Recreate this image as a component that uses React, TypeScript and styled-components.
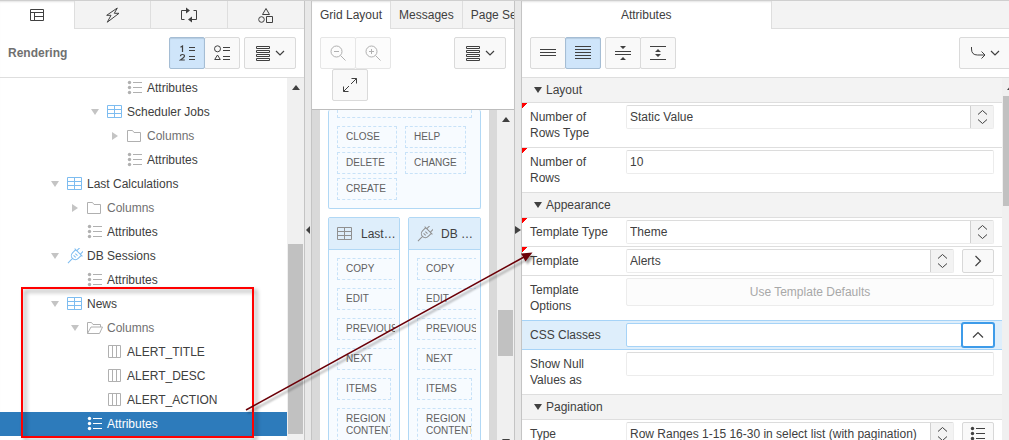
import React from "react";
import styled, { createGlobalStyle, css } from "styled-components";

const GlobalStyle = createGlobalStyle`
  *, *::before, *::after { box-sizing: border-box; }
  body {
    margin: 0;
    overflow: hidden;
    background: #fff;
    color: #404040;
    font-family: "Liberation Sans", Arial, sans-serif;
    font-size: 12px;
    line-height: 16px;
  }
  button, input, select { font: inherit; color: inherit; margin: 0; }
  button { padding: 0; cursor: pointer; }
  svg { display: block; flex: none; }
`;

/* ---------- page frame ---------- */

const Page = styled.div`
  position: relative;
  display: grid;
  grid-template-columns: minmax(0, 304fr) 8px minmax(0, 202fr) 8px minmax(0, 487fr);
  height: 100vh;
  border-top: 1px solid #cfcfcf;
  overflow: hidden;
`;

const Panel = styled.section`
  display: flex;
  flex-direction: column;
  min-width: 0;
  min-height: 0;
  overflow: hidden;
  background: #fff;
  box-shadow: inset 0 2px 2px -1px #e4e4e4;
`;

const WidePanel = styled.div`
  display: flex;
  flex: 1;
  flex-direction: column;
  min-height: 0;
  margin-right: -10px;
`;

const Splitter = styled.div`
  display: flex;
  align-items: center;
  justify-content: center;
  padding-top: 18px;
  background: #e8e8e8;
  border: solid #c4c4c4;
  border-width: 0 1px;
`;

const SplitHandle = styled.button`
  display: flex;
  justify-content: center;
  width: 6px;
  height: 16px;
  align-items: center;
  border: 0;
  background: none;
`;

/* ---------- tabs ---------- */

const IconTabs = styled.div`
  display: grid;
  grid-template-columns: 74fr 76fr 77fr 77fr;
  flex: none;
  height: 28px;
`;

const TextTabs = styled.div`
  display: flex;
  flex: none;
  height: 28px;
  overflow: hidden;
`;

const Tab = styled.button<{ $active?: boolean; $half?: boolean }>`
  display: flex;
  flex: none;
  align-items: center;
  justify-content: center;
  ${(p) => p.$half && "width: 50%;"}
  padding: 0 8px;
  border: solid #dedede;
  border-width: 0 0 1px 1px;
  background: #f3f3f3;
  white-space: nowrap;
  ${(p) => p.$active && "background: transparent; border-color: transparent; border-left-width: 0;"}
  & + & { border-left-width: 1px; }
`;

const TabFill = styled.div`
  flex: 1;
  border: solid #dedede;
  border-width: 0 0 1px 1px;
  background: #f3f3f3;
`;

/* ---------- toolbars ---------- */

const Toolbar = styled.div<{ $strong?: boolean }>`
  display: flex;
  flex: none;
  align-items: flex-start;
  gap: 4px;
  padding: 8px;
  border-bottom: 1px solid ${(p) => (p.$strong ? "#bdbdbd" : "#dedede")};
`;

const Title = styled.h2`
  flex: 1;
  margin: 0;
  font-size: 12px;
  line-height: 32px;
  color: #707070;
`;

const StackedTools = styled.div`
  display: flex;
  flex: 1;
  flex-direction: column;
  align-items: flex-start;
`;

const Spacer = styled.div`
  flex: 1;
`;

const ButtonGroup = styled.div`
  display: flex;
`;

const ToolButton = styled.button<{ $active?: boolean; $menu?: boolean; $indent?: boolean }>`
  display: flex;
  align-items: center;
  justify-content: center;
  gap: 4px;
  width: ${(p) => (p.$menu ? 52 : 36)}px;
  height: 32px;
  border: 1px solid #dadada;
  border-radius: 2px;
  background: #f9f9f9;
  ${(p) => p.$indent && "margin-left: 12px;"}
  & + & { margin-left: -1px; }
  ${(p) =>
    p.$active &&
    css`
      position: relative;
      border-color: #a5bdd4;
      background: #cfe5fa;
      box-shadow: inset 0 1px 1px #b4cbe0;
    `}
  &:disabled { border-color: #e6e6e6; background: #fcfcfc; color: #b0b0b0; cursor: default; }
`;

/* ---------- scroll bars ---------- */

const ScrollTrack = styled.div`
  display: flex;
  flex: none;
  flex-direction: column;
  align-items: center;
  width: 17px;
  padding: 0 1px;
  background: #f0f0f0;
`;

const ScrollArrow = styled.div`
  display: flex;
  flex: none;
  align-items: center;
  height: 18px;
`;

const ScrollPart = styled.div<{ $grow: number; $thumb?: boolean }>`
  flex: ${(p) => p.$grow} 0 0;
  align-self: stretch;
  ${(p) => p.$thumb && "background: #c1c1c1;"}
`;

const ScrollEnd = styled.div`
  flex: none;
  height: 2px;
  overflow: hidden;
`;

/* ---------- tree ---------- */

const Split = styled.div`
  display: flex;
  flex: 1;
  min-height: 0;
`;

const Viewport = styled.div`
  flex: 1;
  min-width: 0;
  overflow: hidden;
`;

const Tree = styled.ul`
  margin: -2px 0 0;
  padding: 0;
  list-style: none;
`;

const TreeRow = styled.li<{ $level: number; $muted?: boolean; $selected?: boolean }>`
  display: flex;
  align-items: center;
  gap: 4px;
  height: 24px;
  padding-left: ${(p) => 27 + p.$level * 20}px;
  white-space: nowrap;
  color: ${(p) => (p.$selected ? "#fff" : p.$muted ? "#707070" : "#404040")};
  background: ${(p) => (p.$selected ? "#2d7bbb" : "transparent")};
`;

const TreeToggle = styled.span`
  display: flex;
  justify-content: center;
  width: 16px;
  color: #c4c4c4;
`;

const TreeIcon = styled.span<{ $tone: string }>`
  display: flex;
  width: 16px;
  color: ${(p) => p.$tone};
`;

/* ---------- grid layout canvas ---------- */

const Canvas = styled.div`
  flex: 1;
  min-width: 0;
  padding: 0 8px;
  overflow: hidden;
  background: #d9d9d9;
`;

const Sheet = styled.div`
  display: flex;
  flex-direction: column;
  gap: 8px;
  padding: 0 8px;
  background: #fff;
`;

const RegionPair = styled.div`
  display: grid;
  grid-template-columns: 72fr 73fr;
  gap: 8px;
`;

const Region = styled.div<{ $open?: boolean }>`
  min-width: 0;
  border: 1px solid #b1d8f5;
  border-radius: 2px;
  background: #f7fbff;
  font-size: 10px;
  line-height: 12px;
  color: #606060;
  ${(p) => p.$open && "border-top: 0; padding: 0 8px 8px;"}
`;

const RegionHead = styled.div`
  display: flex;
  align-items: center;
  gap: 8px;
  height: 32px;
  padding: 0 0 0 8px;
  border-bottom: 1px solid #b1d8f5;
  background: #deeefb;
  color: #909090;
`;

const RegionTitle = styled.span`
  overflow: hidden;
  text-overflow: ellipsis;
  white-space: nowrap;
  font-size: 12px;
  line-height: 16px;
  color: #404040;
`;

const RegionBody = styled.div`
  display: flex;
  flex-direction: column;
  gap: 8px;
  margin: 8px 4px 0 8px;
  overflow: hidden;
`;

const Slot = styled.div<{ $fit?: boolean }>`
  min-width: 60px;
  min-height: 22px;
  padding: 4px 8px;
  border: 1px dashed #c8e2f8;
  overflow: hidden;
  white-space: nowrap;
  ${(p) => p.$fit && "min-width: 0; margin-right: 4px; padding-right: 0; white-space: normal;"}
`;

const SlotFrame = styled.div`
  height: 8px;
  border: 1px dashed #c8e2f8;
  border-top: 0;
`;

const SlotGrid = styled.div`
  display: grid;
  grid-template-columns: max-content max-content;
  gap: 4px 8px;
  padding-top: 8px;
`;

/* ---------- property editor ---------- */

const GroupHead = styled.h3`
  display: flex;
  align-items: center;
  gap: 4px;
  height: 25px;
  margin: 0;
  padding: 0 12px;
  border-bottom: 1px solid #dedede;
  background: #f3f3f3;
  font-size: 12px;
  font-weight: 400;
`;

const Field = styled.div<{ $required?: boolean; $focus?: boolean }>`
  display: flex;
  align-items: flex-start;
  padding: 0 8px;
  border-bottom: 1px solid #dedede;
  ${(p) => p.$required && "background: linear-gradient(135deg, #f00 4px, transparent 4px) no-repeat;"}
  ${(p) =>
    p.$focus &&
    css`
      background: #deeefb;
      border-color: #a6d3f7;
      box-shadow: 0 -1px #a6d3f7;
    `}
`;

const FieldLabel = styled.label`
  flex: 0 0 96px;
  padding: 6px 16px 6px 0;
`;

const FieldControls = styled.div<{ $joined?: boolean }>`
  display: flex;
  flex: 1;
  gap: ${(p) => (p.$joined ? 0 : 8)}px;
  min-width: 0;
  padding: 2px 0;
`;

const TextInput = styled.input<{ $focus?: boolean }>`
  flex: 1;
  min-width: 0;
  height: 24px;
  padding: 0 3px;
  border: 1px solid #ececec;
  border-top-color: #dcdcdc;
  border-radius: 2px;
  outline: 0;
  background: #fff;
  ${(p) => p.$focus && "border-color: #a6d3f7;"}
`;

const SelectBox = styled.div`
  display: flex;
  flex: 1;
  min-width: 0;
  height: 24px;
  border: 1px solid #ececec;
  border-top-color: #dcdcdc;
  border-radius: 2px;
  background: #fff;
`;

const Select = styled.select`
  flex: 1;
  min-width: 0;
  padding: 0 3px;
  border: 0;
  outline: 0;
  appearance: none;
  background: none;
`;

const SelectMark = styled.span`
  display: flex;
  flex: none;
  align-items: center;
  justify-content: center;
  width: 23px;
  border-left: 1px solid #d0d0d0;
  background: #f3f3f3;
  pointer-events: none;
`;

const SideButton = styled.button<{ $focus?: boolean }>`
  display: flex;
  flex: none;
  align-items: center;
  justify-content: center;
  width: 32px;
  height: 24px;
  border: 1px solid #d8d8d8;
  border-radius: 2px;
  background: #f9f9f9;
  ${(p) => p.$focus && "border-color: #3d9be9; background: #fff; box-shadow: 0 0 0 1px #3d9be9;"}
`;

const WideButton = styled.button`
  flex: 1;
  height: 28px;
  border: 1px solid #ececec;
  border-radius: 2px;
  background: #fcfcfc;
  color: #a8a8a8;
`;

/* ---------- annotation ---------- */

const RedFrame = styled.div`
  position: absolute;
  left: 21px;
  top: 286px;
  width: 233px;
  height: 151px;
  border: 2px solid #f00;
  filter: drop-shadow(3px 3px 2px rgba(0, 0, 0, 0.4));
  pointer-events: none;
`;

const ArrowLayer = styled.svg`
  position: absolute;
  left: 240px;
  top: 240px;
  pointer-events: none;
  filter: drop-shadow(2px 3px 1px rgba(0, 0, 0, 0.35));
`;

/* ---------- icons ---------- */

const Icon = ({ children }: { children: React.ReactNode }) => (
  <svg width="16" height="16" viewBox="0 0 16 16" fill="none" stroke="currentColor" aria-hidden="true">
    {children}
  </svg>
);

const PageIcon = () => (
  <Icon>
    <path d="M1.5 2.5h13v11h-13zM1.5 5.5h13M5.5 5.5v8M5.5 9.5h9" />
  </Icon>
);
const BoltIcon = () => (
  <Icon>
    <path d="M12.300 1L1.700 8.300H6L2.300 15.200 14 6.300H9.300z" strokeLinejoin="round" />
  </Icon>
);
const ProcessIcon = () => (
  <Icon>
    <path d="M3.500 12.500h-3v-9h5M12.500 3.500h3v9h-5" />
    <path d="M5 .500l4 3-4 3zM11 9.500l-4 3 4 3z" fill="currentColor" stroke="none" />
  </Icon>
);
const ShapesIcon = () => (
  <Icon>
    <path d="M8 1.500l3.500 6h-7zM8.500 9.500h6v6h-6z" />
    <circle cx="3.500" cy="12.500" r="2.800" />
  </Icon>
);
const OrderIcon = () => (
  <Icon>
    <path d="M1.500 2.200L3.500 1v6M1.500 11.300q0-1.800 2-1.800t2 1.500q0 1.200-4 4h4.300" strokeWidth="1.200" />
    <path d="M10 2.500h6M10 5.500h6M10 11.500h6M10 14.500h6" />
  </Icon>
);
const GroupIcon = () => (
  <Icon>
    <circle cx="3.500" cy="3.800" r="3" />
    <path d="M3.500 10l2.800 4.500H.700zM9 2.500h7M9 5.500h7M9 11.500h7M9 14.500h7" />
  </Icon>
);
const StackIcon = () => (
  <Icon>
    <path d="M1.500 1.500h13v2h-13zM1.500 5.500h13v2h-13zM1.500 9.500h13v2h-13zM1.500 13.500h13v2h-13z" />
  </Icon>
);
const ChevronDown = () => (
  <svg width="10" height="8" viewBox="0 0 10 8" fill="none" stroke="currentColor" aria-hidden="true">
    <path d="M1 2l4 4 4-4" strokeWidth="1.200" />
  </svg>
);
const ZoomIcon = ({ plus }: { plus?: boolean }) => (
  <Icon>
    <circle cx="6.500" cy="6.500" r="5.500" />
    <path d={plus ? "M10.500 10.500l5 5M4 6.500h5M6.500 4v5" : "M10.500 10.500l5 5M4 6.500h5"} />
  </Icon>
);
const ExpandIcon = () => (
  <Icon>
    <path d="M9.500 1.500h5v5M14.500 1.500L9 7M1.500 9.500v5h5M1.500 14.500L7 9" />
  </Icon>
);
const LinesIcon = ({ rows }: { rows: number[] }) => (
  <Icon>
    <path d={rows.map((y) => `M0 ${y}.5h16`).join("")} />
  </Icon>
);
const CollapseIcon = () => (
  <Icon>
    <path d="M0 6.500h16M0 9.500h16" />
    <path d="M5 1h6L8 4zM5 15h6l-3-3z" fill="currentColor" stroke="none" />
  </Icon>
);
const ExpandRowsIcon = () => (
  <Icon>
    <path d="M0 1.500h16M0 14.500h16" />
    <path d="M5 7h6L8 4zM5 9h6l-3 3z" fill="currentColor" stroke="none" />
  </Icon>
);
const GoIcon = () => (
  <Icon>
    <path d="M1.500 2v2q0 6 6 6h7M11.500 6.500l3.500 3.500-3.500 3.500" />
  </Icon>
);
const TableIcon = () => (
  <Icon>
    <path d="M.5 1.500h14v12H.5zM.5 5.500h14M.5 9.500h14M7.500 1.500v12" />
  </Icon>
);
const PlugIcon = () => (
  <Icon>
    <path
      d="M5.500-1.500v4M10.500-1.500v4M2.500 3h11M4 3v4.500a4 4 0 0 0 8 0V3M8 11.500V18M6.500 6h3M6.500 8.500h3"
      transform="rotate(45 8 8)"
    />
  </Icon>
);
const FolderIcon = () => (
  <Icon>
    <path d="M.5 13.500v-11h5l1.500 2h6.500v9z" />
  </Icon>
);
const OpenFolderIcon = () => (
  <Icon>
    <path d="M.5 13.500v-11h4l1.500 2h7.500v2.500M.5 13.500l3.500-6.500h11.500l-3 6.500z" />
  </Icon>
);
const ColumnIcon = () => (
  <Icon>
    <path d="M1.500 1.500h12v12h-12zM5.500 1.500v12M9.500 1.500v12" />
  </Icon>
);
const ListIcon = () => (
  <Icon>
    <path d="M6 2.500h9M6 7.500h9M6 12.500h9" />
    <g fill="currentColor" stroke="none">
      <circle cx="2.500" cy="2.500" r="1.700" />
      <circle cx="2.500" cy="7.500" r="1.700" />
      <circle cx="2.500" cy="12.500" r="1.700" />
    </g>
  </Icon>
);
const UpDownIcon = () => (
  <svg width="11" height="16" viewBox="0 0 11 16" fill="none" stroke="currentColor" aria-hidden="true">
    <path d="M1 5.500L5.500 1.500 10 5.500M1 10.500l4.500 4 4.500-4" />
  </svg>
);
const Chevron = ({ up }: { up?: boolean }) => (
  <Icon>
    <path d={up ? "M3 10.500l5-5 5 5" : "M5.500 3l5 5-5 5"} strokeWidth="1.200" />
  </Icon>
);
const Triangle = ({ dir }: { dir: "up" | "down" | "left" | "right" }) => {
  const shapes = { up: "M0 7h8L4 2z", down: "M0 1h8L4 7z", left: "M6 0v8L2 4z", right: "M1 0v8l6-4z" };
  return (
    <svg width="8" height="8" viewBox="0 0 8 8" fill="currentColor" aria-hidden="true">
      <path d={shapes[dir]} />
    </svg>
  );
};

/* ---------- data ---------- */

type NodeKind = "list" | "table" | "plug" | "folder" | "open" | "column";
type TreeNode = { level: number; kind: NodeKind; label: string; toggle?: "down" | "right"; selected?: boolean };

const nodes: TreeNode[] = [
  { level: 4, kind: "list", label: "Attributes" },
  { level: 3, kind: "table", label: "Scheduler Jobs", toggle: "down" },
  { level: 4, kind: "folder", label: "Columns", toggle: "right" },
  { level: 4, kind: "list", label: "Attributes" },
  { level: 1, kind: "table", label: "Last Calculations", toggle: "down" },
  { level: 2, kind: "folder", label: "Columns", toggle: "right" },
  { level: 2, kind: "list", label: "Attributes" },
  { level: 1, kind: "plug", label: "DB Sessions", toggle: "down" },
  { level: 2, kind: "list", label: "Attributes" },
  { level: 1, kind: "table", label: "News", toggle: "down" },
  { level: 2, kind: "open", label: "Columns", toggle: "down" },
  { level: 3, kind: "column", label: "ALERT_TITLE" },
  { level: 3, kind: "column", label: "ALERT_DESC" },
  { level: 3, kind: "column", label: "ALERT_ACTION" },
  { level: 2, kind: "list", label: "Attributes", selected: true },
];

const nodeIcons: Record<NodeKind, React.FC> = {
  list: ListIcon,
  table: TableIcon,
  plug: PlugIcon,
  folder: FolderIcon,
  open: OpenFolderIcon,
  column: ColumnIcon,
};

const slotNames = ["COPY", "EDIT", "PREVIOUS", "NEXT"];

/* ---------- parts ---------- */

const Scrollbar = ({ parts, end }: { parts: [number, number, number]; end?: boolean }) => (
  <ScrollTrack aria-hidden="true">
    <ScrollArrow><Triangle dir="up" /></ScrollArrow>
    <ScrollPart $grow={parts[0]} />
    <ScrollPart $grow={parts[1]} $thumb />
    <ScrollPart $grow={parts[2]} />
    {end && <ScrollEnd><Triangle dir="down" /></ScrollEnd>}
  </ScrollTrack>
);

const TreeItem = ({ node }: { node: TreeNode }) => {
  const Glyph = nodeIcons[node.kind];
  const blue = node.kind === "table" || node.kind === "plug";
  return (
    <TreeRow $level={node.level} $muted={node.label === "Columns"} $selected={node.selected}>
      <TreeToggle>{node.toggle && <Triangle dir={node.toggle} />}</TreeToggle>
      <TreeIcon $tone={node.selected ? "#fff" : blue ? "#7dbcf0" : "#b0b0b0"}><Glyph /></TreeIcon>
      {node.label}
    </TreeRow>
  );
};

const GridRegion = ({ title, icon }: { title: string; icon: React.ReactNode }) => (
  <Region>
    <RegionHead>{icon}<RegionTitle>{title}</RegionTitle></RegionHead>
    <RegionBody>
      {slotNames.map((name) => <Slot key={name}>{name}</Slot>)}
      <Slot $fit>ITEMS</Slot>
      <Slot $fit>REGION CONTENT</Slot>
    </RegionBody>
  </Region>
);

const SelectField = ({ id, label, value, required, side }: {
  id: string; label: string; value: string; required?: boolean; side?: React.ReactNode;
}) => (
  <Field $required={required}>
    <FieldLabel htmlFor={id}>{label}</FieldLabel>
    <FieldControls>
      <SelectBox>
        <Select id={id} defaultValue={value}><option>{value}</option></Select>
        <SelectMark><UpDownIcon /></SelectMark>
      </SelectBox>
      {side}
    </FieldControls>
  </Field>
);

const Group = ({ name }: { name: string }) => (
  <GroupHead><Triangle dir="down" />{name}</GroupHead>
);

export default function App() {
  return (
    <>
      <GlobalStyle />
      <Page>
        <Panel>
          <IconTabs role="tablist">
            <Tab $active role="tab" aria-label="Rendering"><PageIcon /></Tab>
            <Tab role="tab" aria-label="Dynamic Actions"><BoltIcon /></Tab>
            <Tab role="tab" aria-label="Processing"><ProcessIcon /></Tab>
            <Tab role="tab" aria-label="Shared Components"><ShapesIcon /></Tab>
          </IconTabs>
          <Toolbar>
            <Title>Rendering</Title>
            <ButtonGroup>
              <ToolButton $active aria-label="Group by processing order"><OrderIcon /></ToolButton>
              <ToolButton aria-label="Group by component type"><GroupIcon /></ToolButton>
            </ButtonGroup>
            <ToolButton $menu aria-label="Menu"><StackIcon /><ChevronDown /></ToolButton>
          </Toolbar>
          <Split>
            <Viewport>
              <Tree>{nodes.map((node, i) => <TreeItem key={i} node={node} />)}</Tree>
            </Viewport>
            <Scrollbar parts={[148, 190, 6]} />
          </Split>
        </Panel>

        <Splitter><SplitHandle aria-label="Collapse left pane"><Triangle dir="left" /></SplitHandle></Splitter>

        <Panel>
          <TextTabs role="tablist">
            <Tab $active role="tab">Grid Layout</Tab>
            <Tab role="tab">Messages</Tab>
            <Tab role="tab">Page Search</Tab>
          </TextTabs>
          <Toolbar $strong>
            <StackedTools>
              <ButtonGroup>
                <ToolButton disabled aria-label="Zoom out"><ZoomIcon /></ToolButton>
                <ToolButton disabled aria-label="Zoom in"><ZoomIcon plus /></ToolButton>
              </ButtonGroup>
              <ToolButton $indent aria-label="Expand"><ExpandIcon /></ToolButton>
            </StackedTools>
            <ToolButton $menu aria-label="Menu"><StackIcon /><ChevronDown /></ToolButton>
          </Toolbar>
          <Split>
            <Canvas>
              <Sheet>
                <Region $open>
                  <SlotFrame />
                  <SlotGrid>
                    <Slot>CLOSE</Slot>
                    <Slot>HELP</Slot>
                    <Slot>DELETE</Slot>
                    <Slot>CHANGE</Slot>
                    <Slot>CREATE</Slot>
                  </SlotGrid>
                </Region>
                <RegionPair>
                  <GridRegion title="Last Calculations" icon={<TableIcon />} />
                  <GridRegion title="DB Sessions" icon={<PlugIcon />} />
                </RegionPair>
              </Sheet>
            </Canvas>
            <Scrollbar parts={[181, 46, 82]} end />
          </Split>
        </Panel>

        <Splitter><SplitHandle aria-label="Collapse right pane"><Triangle dir="right" /></SplitHandle></Splitter>

        <Panel>
          <WidePanel>
            <TextTabs role="tablist">
              <Tab $active $half role="tab">Attributes</Tab>
              <TabFill />
            </TextTabs>
            <Toolbar>
              <ButtonGroup>
                <ToolButton aria-label="Show common"><LinesIcon rows={[4, 7, 10]} /></ToolButton>
                <ToolButton $active aria-label="Show all"><LinesIcon rows={[1, 4, 7, 10, 13]} /></ToolButton>
              </ButtonGroup>
              <ButtonGroup>
                <ToolButton aria-label="Collapse all"><CollapseIcon /></ToolButton>
                <ToolButton aria-label="Expand all"><ExpandRowsIcon /></ToolButton>
              </ButtonGroup>
              <Spacer />
              <ToolButton $menu aria-label="Go to group"><GoIcon /><ChevronDown /></ToolButton>
            </Toolbar>
            <Split>
              <Viewport>
                <Group name="Layout" />
                <SelectField id="rows-type" label="Number of Rows Type" value="Static Value" required />
                <Field $required>
                  <FieldLabel htmlFor="rows">Number of Rows</FieldLabel>
                  <FieldControls><TextInput id="rows" defaultValue="10" /></FieldControls>
                </Field>
                <Group name="Appearance" />
                <SelectField id="template-type" label="Template Type" value="Theme" required />
                <SelectField
                  id="template"
                  label="Template"
                  value="Alerts"
                  required
                  side={<SideButton aria-label="Go to template"><Chevron /></SideButton>}
                />
                <Field>
                  <FieldLabel htmlFor="options">Template Options</FieldLabel>
                  <FieldControls><WideButton id="options">Use Template Defaults</WideButton></FieldControls>
                </Field>
                <Field $focus>
                  <FieldLabel htmlFor="classes">CSS Classes</FieldLabel>
                  <FieldControls $joined>
                    <TextInput id="classes" $focus />
                    <SideButton $focus aria-label="List of classes"><Chevron up /></SideButton>
                  </FieldControls>
                </Field>
                <Field>
                  <FieldLabel htmlFor="nulls">Show Null Values as</FieldLabel>
                  <FieldControls><TextInput id="nulls" /></FieldControls>
                </Field>
                <Group name="Pagination" />
                <SelectField
                  id="pagination-type"
                  label="Type"
                  value="Row Ranges 1-15 16-30 in select list (with pagination)"
                  side={<SideButton aria-label="Pagination types"><ListIcon /></SideButton>}
                />
              </Viewport>
              <Scrollbar parts={[0, 110, 234]} />
            </Split>
          </WidePanel>
        </Panel>

        <RedFrame />
        <ArrowLayer width="300" height="180" viewBox="0 0 300 180" aria-hidden="true">
          <path d="M6 169L284 16" stroke="#6b0008" strokeWidth="1.500" />
          <path d="M292.500 11.500L281 12.500l4.500 8z" fill="#6b0008" />
        </ArrowLayer>
      </Page>
    </>
  );
}
